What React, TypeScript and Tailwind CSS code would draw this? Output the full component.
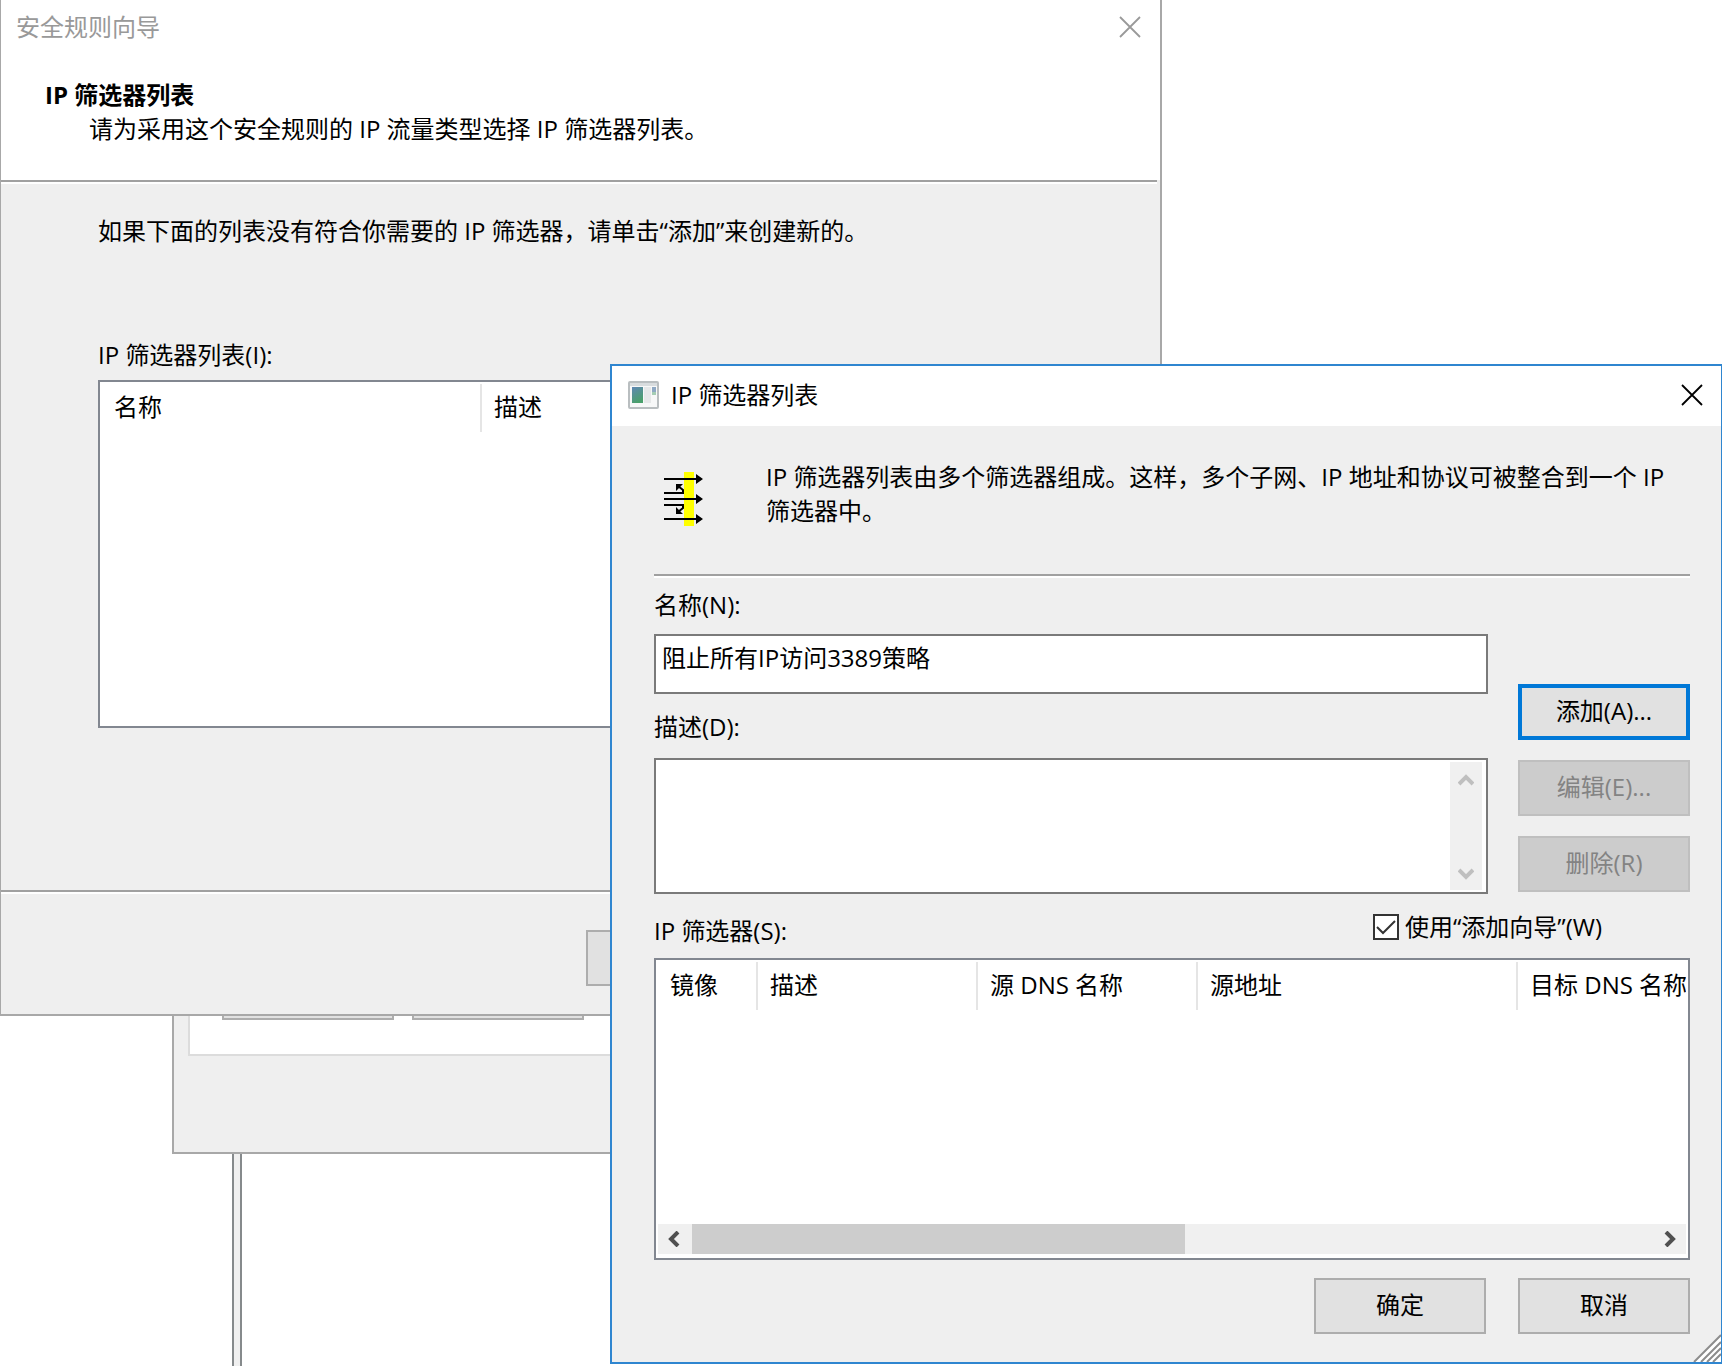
import type React from "react";
import { useState } from "react";

function CloseButton({ className }: { className: string }) {
    return (
        <button type="button" aria-label="关闭" className={`flex h-10 w-10 items-center justify-center ${className}`}>
            <svg width="22" height="22" viewBox="0 0 22 22" fill="none" stroke="currentColor" strokeWidth="1.8">
                <path d="M1 1L21 21M21 1L1 21" />
            </svg>
        </button>
    );
}

function DialogButton({ primary = false, ...props }: React.ButtonHTMLAttributes<HTMLButtonElement> & { primary?: boolean }) {
    return (
        <button
            type="button"
            className={`h-14 w-[172px] shrink-0 whitespace-nowrap bg-[#e1e1e1] pb-[2px] disabled:border-[#bfbfbf] disabled:bg-[#cccccc] disabled:text-[#838383] ${primary ? "border-4 border-[#0078d7]" : "border-2 border-[#adadad]"}`}
            {...props}
        />
    );
}

function Divider({ className = "" }: { className?: string }) {
    return <div className={`h-1 border-t-2 border-[#a0a0a0] bg-white ${className}`} />;
}

function HeaderCell({ children, className = "", last = false }: { children: React.ReactNode; className?: string; last?: boolean }) {
    return (
        <th scope="col" className={`overflow-hidden p-0 text-left font-normal ${className}`}>
            <div className={`flex h-12 items-center whitespace-nowrap pb-[2px] pl-3 ${last ? "" : "border-r-2 border-[#e5e5e5]"}`}>
                {children}
            </div>
        </th>
    );
}

function WindowIcon() {
    return (
        <svg width="31" height="28" viewBox="0 0 31 28" aria-hidden="true">
            <defs>
                <linearGradient id="pane" x1="0" y1="0" x2="0.4" y2="1">
                    <stop offset="0" stopColor="#5f86b4" />
                    <stop offset="1" stopColor="#4aa06c" />
                </linearGradient>
            </defs>
            <rect x="1" y="1" width="29" height="26" rx="1" fill="#f7f8f8" stroke="#b9bec0" strokeWidth="2" />
            <rect x="2" y="2" width="27" height="3" fill="#d8dcde" />
            <rect x="4" y="6" width="11" height="16" fill="url(#pane)" />
            <rect x="16" y="6" width="7" height="16" fill="#e6e8e9" />
            <rect x="24" y="6" width="4" height="5" fill="#8fa9c4" />
            <rect x="24" y="11" width="4" height="3" fill="#a5cdb4" />
        </svg>
    );
}

function FilterIcon() {
    return (
        <svg width="40" height="54" viewBox="0 0 40 54" className="mt-3 shrink-0" aria-hidden="true">
            <rect x="20" width="10" height="54" fill="#ffff00" />
            <g stroke="#000" strokeWidth="2" fill="none">
                <path d="M0 7H34M0 27H34M0 47H34" />
                <path d="M0 21H19V18L14 14M0 33H19V36L14 40" />
            </g>
            <path d="M32 2L39 7L32 12ZM32 22L39 27L32 32ZM32 42L39 47L32 52Z" />
            <path d="M12 12H19L12 19ZM12 42H19L12 35Z" />
        </svg>
    );
}

function Chevron({ d, className = "" }: { d: string; className?: string }) {
    return (
        <svg width="16" height="16" viewBox="0 0 16 16" fill="none" stroke="currentColor" strokeWidth="4" className={className}>
            <path d={d} />
        </svg>
    );
}

function BackgroundWindows() {
    return (
        <>
            <div className="absolute inset-0 flex">
                <div className="w-[232px]" />
                <div className="w-[10px] border-x-2 border-[#868a8c] bg-[#f0f0f0]" />
                <div className="flex-1" />
            </div>
            <div className="absolute left-[172px] top-[900px] w-[900px] border-2 border-[#a8a8a8] bg-[#efefef] px-[14px] pb-[96px]">
                <div className="flex gap-[18px] border-2 border-t-0 border-[#dcdcdc] bg-white pb-[34px] pl-8 pt-[62px]">
                    <DialogButton tabIndex={-1} aria-label="添加" />
                    <DialogButton tabIndex={-1} aria-label="编辑" />
                </div>
            </div>
        </>
    );
}

function RuleWizard() {
    return (
        <section className="absolute left-0 top-0 w-[1162px] border-2 border-l border-t-0 border-[#a8a8a8] bg-[#efefef]">
            <div className="bg-white pb-[34px]">
                <div className="flex h-14 items-center justify-between pb-[2px] pl-[15px] pr-[10px]">
                    <h1 className="text-[#999999]">安全规则向导</h1>
                    <CloseButton className="text-[#999999]" />
                </div>
                <div className="pl-11 pt-[22px]">
                    <h2 className="font-bold">IP 筛选器列表</h2>
                    <p className="pl-11">请为采用这个安全规则的 IP 流量类型选择 IP 筛选器列表。</p>
                </div>
            </div>
            <Divider className="mr-[3px]" />
            <div className="px-[97px] pb-[162px] pt-[30px]">
                <p>如果下面的列表没有符合你需要的 IP 筛选器，请单击“添加”来创建新的。</p>
                <p className="mt-[90px]">IP 筛选器列表(I):</p>
                <div className="mt-2 h-[348px] border-2 border-[#828790] bg-white px-[2px] pt-[2px]">
                    <table className="w-full table-fixed">
                        <thead>
                            <tr>
                                <HeaderCell className="w-[380px]">名称</HeaderCell>
                                <HeaderCell last>描述</HeaderCell>
                            </tr>
                        </thead>
                    </table>
                </div>
            </div>
            <Divider />
            <div className="flex pb-7 pl-[585px] pt-9">
                <DialogButton aria-label="上一步" />
            </div>
        </section>
    );
}

function FilterListDialog() {
    const [name, setName] = useState("阻止所有IP访问3389策略");
    const [description, setDescription] = useState("");
    const [useWizard, setUseWizard] = useState(true);

    return (
        <section className="absolute left-[610px] right-0 top-[364px] border-2 border-r border-[#2f86d0] bg-[#efefef]">
            <div className="flex h-[60px] items-center bg-white pb-[2px] pl-4 pr-[9px]">
                <WindowIcon />
                <h2 className="ml-3 flex-1">IP 筛选器列表</h2>
                <CloseButton className="text-black" />
            </div>

            <div className="pb-7 pl-[42px] pr-[31px] pt-[34px]">
                <div className="flex pl-[10px]">
                    <FilterIcon />
                    <p className="ml-[62px] flex-1">
                        IP 筛选器列表由多个筛选器组成。这样，多个子网、IP 地址和协议可被整合到一个 IP 筛选器中。
                    </p>
                </div>

                <Divider className="mt-[46px]" />

                <div className="mt-[10px] flex gap-[30px]">
                    <div className="flex flex-1 flex-col">
                        <label htmlFor="name">名称(N):</label>
                        <input
                            id="name"
                            type="text"
                            className="mt-3 h-[60px] w-full border-2 border-[#7a7a7a] bg-white pb-4 pl-[6px] outline-none"
                            value={name}
                            onChange={(e) => setName(e.target.value)}
                        />
                        <label htmlFor="description" className="mt-4">
                            描述(D):
                        </label>
                        <div className="mt-[14px] flex h-[136px] border-2 border-[#7a7a7a] bg-white p-[2px]">
                            <textarea
                                id="description"
                                className="flex-1 resize-none px-1 outline-none"
                                value={description}
                                onChange={(e) => setDescription(e.target.value)}
                            />
                            <div className="mr-[2px] flex w-8 flex-col items-center justify-between bg-[#f0f0f0] pb-2 pt-[10px] text-[#bfbfbf]">
                                <Chevron d="M1 12L8 5L15 12" />
                                <Chevron d="M1 4L8 11L15 4" />
                            </div>
                        </div>
                    </div>
                    <div className="flex flex-col justify-end gap-5 pb-[2px]">
                        <DialogButton primary>添加(A)...</DialogButton>
                        <DialogButton disabled>编辑(E)...</DialogButton>
                        <DialogButton disabled>删除(R)</DialogButton>
                    </div>
                </div>

                <div className="mt-4 flex items-start justify-between pr-[88px]">
                    <p className="pt-1">IP 筛选器(S):</p>
                    <div className="flex items-center gap-[6px]">
                        <span className="relative h-[26px] w-[26px]">
                            <input
                                id="wizard"
                                type="checkbox"
                                className="block h-[26px] w-[26px] appearance-none border-2 border-[#333333] bg-white"
                                checked={useWizard}
                                onChange={(e) => setUseWizard(e.target.checked)}
                            />
                            {useWizard && (
                                <svg
                                    viewBox="0 0 26 26"
                                    className="pointer-events-none absolute inset-0"
                                    fill="none"
                                    stroke="#333333"
                                    strokeWidth="2"
                                >
                                    <path d="M4 13L10 19L22 7" />
                                </svg>
                            )}
                        </span>
                        <label htmlFor="wizard">使用“添加向导”(W)</label>
                    </div>
                </div>

                <div className="mt-[10px] flex h-[302px] flex-col justify-between border-2 border-[#828790] bg-white px-[2px] pb-1 pt-[2px]">
                    <table className="w-full table-fixed">
                        <thead>
                            <tr>
                                <HeaderCell className="w-[100px]">镜像</HeaderCell>
                                <HeaderCell className="w-[220px]">描述</HeaderCell>
                                <HeaderCell className="w-[220px]">源 DNS 名称</HeaderCell>
                                <HeaderCell className="w-[320px]">源地址</HeaderCell>
                                <HeaderCell last>目标 DNS 名称</HeaderCell>
                            </tr>
                        </thead>
                    </table>
                    <div className="flex h-[30px] items-center bg-[#f0f0f0] text-[#505050]">
                        <Chevron d="M12 1L5 8L12 15" className="ml-2 mr-[10px]" />
                        <div className="h-full flex-1">
                            <div className="h-full w-[51%] bg-[#cdcdcd]" />
                        </div>
                        <Chevron d="M4 1L11 8L4 15" className="ml-1 mr-2" />
                    </div>
                </div>

                <div className="mt-[18px] flex justify-end gap-8">
                    <DialogButton>确定</DialogButton>
                    <DialogButton>取消</DialogButton>
                </div>
            </div>

            <svg width="28" height="28" viewBox="0 0 28 28" className="absolute bottom-0 right-0" aria-hidden="true">
                <path d="M0 28L28 0V28Z" fill="#fff" />
                <path d="M1 28L28 1M8 28L28 8M14 28L28 14M20 28L28 20" stroke="#8c8c8c" strokeWidth="2" />
            </svg>
        </section>
    );
}

export default function App() {
    return (
        <main className="relative h-screen overflow-hidden bg-white font-['Open_Sans','Noto_Sans_CJK_SC',sans-serif] text-[24px] leading-[34px] text-black">
            <BackgroundWindows />
            <RuleWizard />
            <FilterListDialog />
        </main>
    );
}
